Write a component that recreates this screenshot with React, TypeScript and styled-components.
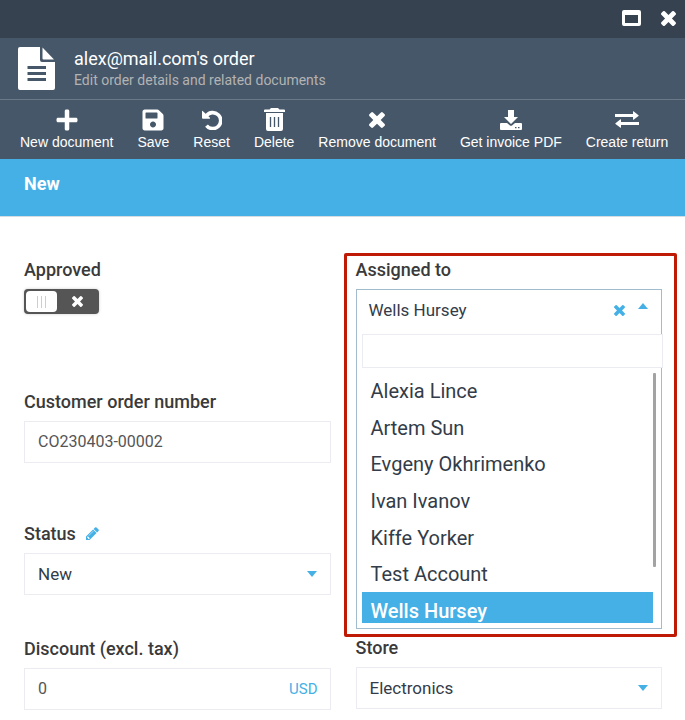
import React, { useState } from 'react';
import styled, { createGlobalStyle } from 'styled-components';
import { FaSave, FaPlus } from 'react-icons/fa';

const blue = '#45b0e6';
const slate = '#465769';

const GlobalStyle = createGlobalStyle`
  *, *::before, *::after { box-sizing: border-box; }
  body { margin: 0; background: #fff; color: #333; font-family: Roboto, "Liberation Sans", sans-serif; }
  button, input, select { font-family: inherit; margin: 0; }
  button { border: 0; padding: 0; background: none; color: inherit; cursor: pointer; }
`;

const Blade = styled.div`
  overflow: hidden;
`;

const WindowBar = styled.div`
  display: flex;
  justify-content: flex-end;
  align-items: center;
  gap: 20px;
  height: 38px;
  padding: 0 9px 2px;
  background: #36424f;
  color: #fff;
`;

const IconButton = styled.button`
  display: flex;
  align-items: center;
  justify-content: center;
`;

const Header = styled.header`
  display: flex;
  align-items: center;
  gap: 19px;
  height: 62px;
  padding: 0 18px;
  background: ${slate};
  border-bottom: 1px solid #6a7887;
`;

const Title = styled.h1`
  margin: 0;
  font-size: 18px;
  line-height: 22px;
  font-weight: 400;
  color: #fff;
`;

const Subtitle = styled.p`
  margin: 0;
  font-size: 14px;
  line-height: 20px;
  color: #b3b3b3;
`;

const Toolbar = styled.nav`
  display: flex;
  gap: 24px;
  height: 59px;
  padding: 6px 20px 0;
  background: ${slate};
  color: #fff;
`;

const Tool = styled.button`
  display: flex;
  flex: none;
  flex-direction: column;
  align-items: center;
  font-family: "Liberation Sans", Arial, sans-serif;
  font-size: 14px;
  line-height: 18px;
  white-space: nowrap;
`;

const ToolIcon = styled.span`
  display: flex;
  align-items: center;
  height: 27px;
`;

const StatusBanner = styled.div`
  height: 58px;
  padding: 13px 24px;
  background: ${blue};
  border-bottom: 1px solid #d5dde4;
  color: #fff;
  font-size: 18px;
  line-height: 24px;
  font-weight: 700;
`;

const Form = styled.form`
  display: grid;
  grid-template-columns: 1fr 1fr;
  gap: 25px;
  padding: 42px 23px 10px 24px;
`;

const Column = styled.div`
  display: flex;
  flex-direction: column;
  min-width: 0;
`;

const Field = styled.div<{ $after?: number }>`
  display: flex;
  flex-direction: column;
  gap: 9px;
  margin-bottom: ${p => p.$after ?? 0}px;
`;

const Highlighted = styled(Field)`
  position: relative;
  &::before {
    content: '';
    position: absolute;
    inset: -6px -15px -8px -12px;
    border: 3px solid #bf1a06;
    border-radius: 2px;
    pointer-events: none;
  }
`;

const LabelRow = styled.div`
  display: flex;
  align-items: center;
  gap: 10px;
  height: 21px;
  color: ${blue};
`;

const Label = styled.label`
  font-size: 18px;
  line-height: 21px;
  font-weight: 500;
  color: #3a3a3a;
`;

const Control = styled.div`
  display: flex;
  align-items: center;
  height: 42px;
  border: 1px solid #eaecf2;
  background: #fff;
  color: ${blue};
`;

const TextInput = styled.input`
  flex: 1;
  min-width: 0;
  height: 100%;
  padding: 0 13px 2px;
  border: 0;
  outline: 0;
  background: none;
  font-size: 16px;
  color: #555;
`;

const Currency = styled.span`
  padding-right: 12px;
  font-size: 15px;
  color: ${blue};
`;

const Select = styled.select`
  flex: 1;
  min-width: 0;
  height: 100%;
  padding: 0 32px 0 13px;
  border: 0;
  outline: 0;
  appearance: none;
  background: none;
  font-size: 17px;
  color: #333c48;
`;

const SelectCaret = styled.span`
  display: flex;
  width: 10px;
  margin: 0 13px 0 -23px;
  pointer-events: none;
`;

const Switch = styled.label`
  display: flex;
  align-items: center;
  width: 75px;
  height: 25px;
  padding: 2px;
  border-radius: 4px;
  background: #555;
  color: #fff;
  box-shadow: 0 0 3px #ccc;
  cursor: pointer;
`;

const SwitchInput = styled.input`
  position: absolute;
  opacity: 0;
  & ~ svg { margin: auto; }
  &:checked ~ span { order: 1; }
`;

const Knob = styled.span`
  display: flex;
  align-items: center;
  justify-content: center;
  gap: 3px;
  width: 31px;
  height: 21px;
  border-radius: 4px;
  background: #fff;
  i { width: 1px; height: 12px; background: #d0ccd0; }
`;

const Dropdown = styled.div`
  height: 340px;
  border: 1px solid #a1bccd;
  background: #fff;
`;

const DropdownHead = styled.div`
  display: flex;
  align-items: center;
  gap: 13px;
  height: 40px;
  padding: 0 13px 0 12px;
  font-size: 17px;
  color: ${blue};
`;

const OpenCaret = styled.span`
  display: flex;
  height: 14px;
`;

const Chosen = styled.span`
  flex: 1;
  color: #333c48;
`;

const DropdownBody = styled.div`
  padding: 4px 0 0 5px;
`;

const Search = styled.input`
  position: relative;
  display: block;
  width: calc(100% + 2px);
  height: 34px;
  padding: 0 8px;
  border: 1px solid #eaecf2;
  outline: 0;
  background: #fff;
  font-size: 16px;
`;

const Scroller = styled.div`
  display: flex;
  height: 250px;
  margin: 5px 5px 0 0;
  overflow: hidden;
`;

const Options = styled.ul`
  flex: 1;
  display: grid;
  grid-template-rows: repeat(7, 1fr);
  height: 256px;
  margin: 0;
  padding: 0;
  list-style: none;
`;

const Option = styled.li<{ $selected: boolean }>`
  display: flex;
  align-items: center;
  padding-left: 9px;
  font-size: 20px;
  line-height: 24px;
  cursor: pointer;
  font-weight: ${p => (p.$selected ? 500 : 400)};
  background: ${p => (p.$selected ? blue : 'transparent')};
  color: ${p => (p.$selected ? '#fff' : '#333c48')};
`;

const Thumb = styled.div`
  width: 3px;
  height: 194px;
  border-radius: 1px;
  background: #a3a3a3;
`;

const CrossIcon = ({ size }: { size: number }) => (
  <svg width={size} height={size} viewBox="302 366 1188 1188" fill="currentColor" aria-hidden="true">
    <path d="M1490 1322q0 40-28 68l-136 136q-28 28-68 28t-68-28l-294-294-294 294q-28 28-68 28t-68-28l-136-136q-28-28-28-68t28-68l294-294-294-294q-28-28-28-68t28-68l136-136q28-28 68-28t68 28l294 294 294-294q28-28 68-28t68 28l136 136q28 28 28 68t-28 68l-294 294 294 294q28 28 28 68z" />
  </svg>
);

const PencilIcon = () => (
  <svg width="13" height="13" viewBox="128 128 1536 1536" fill="currentColor" aria-hidden="true">
    <path d="M491 1536l91-91-235-235-91 91v107h128v128h107zm523-928q0-22-22-22-10 0-17 7l-542 542q-7 7-7 17 0 22 22 22 10 0 17-7l542-542q7-7 7-17zm-54-192l416 416-832 832h-416v-416zm683 96q0 53-37 90l-166 166-416-416 166-165q36-38 90-38 53 0 91 38l235 234q37 39 37 91z" />
  </svg>
);

const WindowIcon = () => (
  <svg width="19" height="16" viewBox="0 0 19 16" aria-hidden="true">
    <path fill="#fff" fillRule="evenodd" d="M2 0h15a2 2 0 0 1 2 2v12a2 2 0 0 1-2 2H2a2 2 0 0 1-2-2V2a2 2 0 0 1 2-2zm1 5v8h13V5z" />
  </svg>
);

const DocumentIcon = () => (
  <svg width="37" height="43" viewBox="0 0 37 43" aria-hidden="true">
    <path fill="#fff" d="M2 0h20v13a2 2 0 0 0 2 2h13v26a2 2 0 0 1-2 2H2a2 2 0 0 1-2-2V2a2 2 0 0 1 2-2z" />
    <path fill="#fff" d="M24.500.5L36 12.500H25.500a1 1 0 0 1-1-1z" />
    <path stroke={slate} strokeWidth="3" d="M9.500 20.500h18.500M9.500 26.500h18.500M9.500 32.500h18.500" />
  </svg>
);

const UndoIcon = () => (
  <svg width="20" height="20" viewBox="0 0 20 20" fill="none" aria-hidden="true">
    <path stroke="#fff" strokeWidth="3.600" d="M4.500 5.600A8 8 0 1 1 4.500 15.600" />
    <path fill="#fff" d="M0 1.200Q0 .3.7.9L8 7.800Q8.300 8.700 7.500 8.700H1Q0 8.700 0 7.700z" />
  </svg>
);

const TrashIcon = () => (
  <svg width="21" height="23" viewBox="0 0 21 23" aria-hidden="true">
    <path fill="#fff" d="M7 0h7l1.500 1.500H20a1 1 0 0 1 1 1V4H0V2.500a1 1 0 0 1 1-1h4.500zM2 5h17V21a2 2 0 0 1-2 2H4a2 2 0 0 1-2-2z" />
    <path stroke={slate} strokeWidth="1.300" d="M6.500 9v10M10.500 9v10M14.500 9v10" />
  </svg>
);

const DownloadIcon = () => (
  <svg width="22" height="20" viewBox="0 0 22 20" fill="#fff" aria-hidden="true">
    <path d="M8 0h6v7h4L11 14 4 7h4z" />
    <path fillRule="evenodd" d="M1 13h6l3 2.500q1 .7 2 0L15 13h6a1 1 0 0 1 1 1v5a1 1 0 0 1-1 1H1a1 1 0 0 1-1-1v-5a1 1 0 0 1 1-1zm14 4v1.200h1.500V17zm3 0v1.200h1.500V17z" />
  </svg>
);

const ExchangeIcon = () => (
  <svg width="24" height="17" viewBox="0 0 24 17" fill="#fff" aria-hidden="true">
    <path d="M0 3h18V.5Q18 0 18.500.200L23.500 4.200Q24 4.700 23.500 5.100L18.500 8.700Q18 9 18 8.500V6H0z" />
    <path d="M24 11H6V8.500Q6 8 5.500 8.200L.5 12.200Q0 12.700.5 13.100L5.500 16.700Q6 17 6 16.500V14h18z" />
  </svg>
);

const Caret = ({ up = false }: { up?: boolean }) => (
  <svg width="10" height="6" viewBox="0 0 10 6" fill={blue} aria-hidden="true">
    <path d={up ? 'M0 6L5 0l5 6z' : 'M0 0h10L5 6z'} />
  </svg>
);

const tools = [
  { label: 'New document', icon: <FaPlus size={24} /> },
  { label: 'Save', icon: <FaSave size={24} /> },
  { label: 'Reset', icon: <UndoIcon /> },
  { label: 'Delete', icon: <TrashIcon /> },
  { label: 'Remove document', icon: <CrossIcon size={16} /> },
  { label: 'Get invoice PDF', icon: <DownloadIcon /> },
  { label: 'Create return', icon: <ExchangeIcon /> },
];

const people = ['Alexia Lince', 'Artem Sun', 'Evgeny Okhrimenko', 'Ivan Ivanov', 'Kiffe Yorker', 'Test Account', 'Wells Hursey'];

export default function App() {
  const [assignee, setAssignee] = useState('Wells Hursey');

  return (
    <Blade>
      <GlobalStyle />
      <WindowBar>
        <IconButton type="button" aria-label="Maximize"><WindowIcon /></IconButton>
        <IconButton type="button" aria-label="Close"><CrossIcon size={15} /></IconButton>
      </WindowBar>
      <Header>
        <DocumentIcon />
        <div>
          <Title>alex@mail.com's order</Title>
          <Subtitle>Edit order details and related documents</Subtitle>
        </div>
      </Header>
      <Toolbar>
        {tools.map(tool => (
          <Tool type="button" key={tool.label}>
            <ToolIcon>{tool.icon}</ToolIcon>
            {tool.label}
          </Tool>
        ))}
      </Toolbar>
      <StatusBanner>New</StatusBanner>
      <Form>
        <Column>
          <Field $after={77}>
            <LabelRow><Label htmlFor="approved">Approved</Label></LabelRow>
            <Switch>
              <SwitchInput id="approved" type="checkbox" />
              <Knob><i /><i /><i /></Knob>
              <CrossIcon size={11} />
            </Switch>
          </Field>
          <Field $after={60}>
            <LabelRow><Label htmlFor="number">Customer order number</Label></LabelRow>
            <Control><TextInput id="number" defaultValue="CO230403-00002" /></Control>
          </Field>
          <Field $after={43}>
            <LabelRow>
              <Label htmlFor="status">Status</Label>
              <IconButton type="button" aria-label="Edit statuses"><PencilIcon /></IconButton>
            </LabelRow>
            <Control>
              <Select id="status"><option>New</option></Select>
              <SelectCaret><Caret /></SelectCaret>
            </Control>
          </Field>
          <Field>
            <LabelRow><Label htmlFor="discount">Discount (excl. tax)</Label></LabelRow>
            <Control>
              <TextInput id="discount" defaultValue="0" />
              <Currency>USD</Currency>
            </Control>
          </Field>
        </Column>
        <Column>
          <Highlighted $after={8}>
            <LabelRow><Label htmlFor="assignee">Assigned to</Label></LabelRow>
            <Dropdown>
              <DropdownHead>
                <Chosen>{assignee}</Chosen>
                <IconButton type="button" aria-label="Clear" onClick={() => setAssignee('')}><CrossIcon size={11} /></IconButton>
                <OpenCaret><Caret up /></OpenCaret>
              </DropdownHead>
              <DropdownBody>
                <Search id="assignee" type="text" />
                <Scroller>
                  <Options role="listbox" aria-label="Assigned to">
                    {people.map(name => (
                      <Option
                        key={name}
                        role="option"
                        aria-selected={name === assignee}
                        $selected={name === assignee}
                        onClick={() => setAssignee(name)}
                      >
                        {name}
                      </Option>
                    ))}
                  </Options>
                  <Thumb />
                </Scroller>
              </DropdownBody>
            </Dropdown>
          </Highlighted>
          <Field>
            <LabelRow><Label htmlFor="store">Store</Label></LabelRow>
            <Control>
              <Select id="store"><option>Electronics</option></Select>
              <SelectCaret><Caret /></SelectCaret>
            </Control>
          </Field>
        </Column>
      </Form>
    </Blade>
  );
}
